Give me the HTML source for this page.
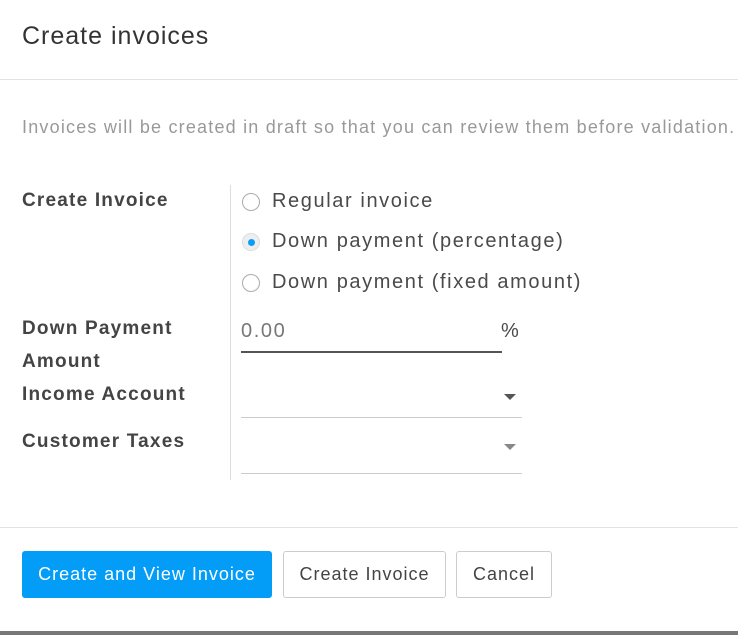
<!DOCTYPE html>
<html><head><style>
*{margin:0;padding:0;box-sizing:border-box}
body{width:738px;height:635px;background:#fff;font-family:"Liberation Sans",sans-serif;color:#4c4c4c;position:relative;overflow:hidden}
.a{position:absolute;white-space:nowrap}
.lbl{font-size:19px;font-weight:bold;color:#444;letter-spacing:1.2px}
.t{font-size:20px;color:#4a4a4a;letter-spacing:1.6px}
.r{position:absolute;width:18px;height:18px;border:1px solid #aaa;border-radius:50%;background:#fff}
.btn{position:absolute;top:551px;height:47px;border:1px solid #ccc;border-radius:3px;font-size:18px;color:#444;display:flex;align-items:center;justify-content:center;letter-spacing:1px}
.car{position:absolute;width:0;height:0;border-left:6px solid transparent;border-right:6px solid transparent;border-top:6px solid #555}
</style></head><body>
<div class="a" style="left:22px;top:22px;font-size:25px;color:#333;letter-spacing:1px">Create invoices</div>
<div class="a" style="left:0;top:79px;width:738px;height:1px;background:#e2e2e2"></div>
<div class="a" style="left:22px;top:117px;font-size:18px;color:#999;letter-spacing:1.2px">Invoices will be created in draft so that you can review them before validation.</div>
<div class="a lbl" style="left:22px;top:190px">Create Invoice</div>
<div class="a lbl" style="left:22px;top:318px">Down Payment</div>
<div class="a lbl" style="left:22px;top:351px">Amount</div>
<div class="a lbl" style="left:22px;top:384px">Income Account</div>
<div class="a lbl" style="left:22px;top:431px">Customer Taxes</div>
<div class="a" style="left:230px;top:185px;width:1px;height:295px;background:#ddd"></div>
<div class="r" style="left:242px;top:193px"></div>
<div class="r" style="left:242px;top:233px;background:#eceef0;border-color:#ddd"><div style="position:absolute;left:5px;top:5px;width:7px;height:7px;border-radius:50%;background:#0d9cf5"></div></div>
<div class="r" style="left:242px;top:274px"></div>
<div class="a t" style="left:272px;top:190px">Regular invoice</div>
<div class="a t" style="left:272px;top:230px">Down payment (percentage)</div>
<div class="a t" style="left:272px;top:271px">Down payment (fixed amount)</div>
<div class="a t" style="left:241px;top:320px;color:#777">0.00</div>
<div class="a t" style="left:501px;top:320px">%</div>
<div class="a" style="left:241px;top:351px;width:261px;height:2px;background:#555"></div>
<div class="car" style="left:504px;top:394px"></div>
<div class="a" style="left:241px;top:417px;width:281px;height:1px;background:#ccc"></div>
<div class="car" style="left:504px;top:444px;border-top-color:#888"></div>
<div class="a" style="left:241px;top:473px;width:281px;height:1px;background:#ccc"></div>
<div class="a" style="left:0;top:527px;width:738px;height:1px;background:#e2e2e2"></div>
<div class="btn" style="left:22px;width:250px;background:#039df8;border-color:#039df8;color:#fff">Create and View Invoice</div>
<div class="btn" style="left:283px;width:163px">Create Invoice</div>
<div class="btn" style="left:456px;width:96px">Cancel</div>
<div class="a" style="left:0;top:631px;width:738px;height:4px;background:#777"></div>
</body></html>
